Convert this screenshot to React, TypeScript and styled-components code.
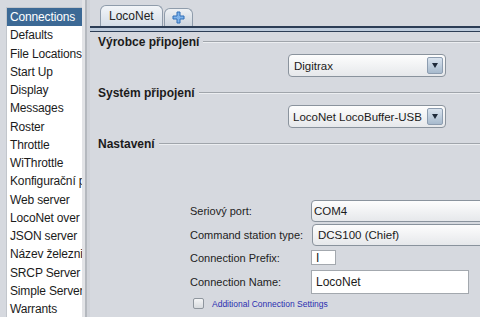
import styled, { createGlobalStyle } from "styled-components";

const GlobalStyle = createGlobalStyle`
    html, body {
        margin: 0;
        padding: 0;
        background: #d6d9df;
        font-family: "Liberation Sans", Arial, sans-serif;
        color: #1b1b1b;
    }
`;

const Window = styled.div`
    display: flex;
    width: 480px;
    height: 317px;
    overflow: hidden;
    background: #d6d9df;
`;

const Sidebar = styled.div`
    width: 82px;
    padding: 7px 0 0 6px;
    box-sizing: border-box;
    flex-shrink: 0;
`;

const List = styled.ul`
    margin: 0;
    padding: 0;
    list-style: none;
    background: #fff;
    border-left: 1px solid #c2c6cc;
    border-top: 1px solid #c2c6cc;
    height: 330px;
    overflow: hidden;
`;

const ListItem = styled.li<{ $selected?: boolean }>`
    height: 18.25px;
    line-height: 18.25px;
    padding-left: 3px;
    font-size: 12px;
    letter-spacing: -0.15px;
    white-space: nowrap;
    overflow: hidden;
    background: ${(p) => (p.$selected ? "#3c6995" : "transparent")};
    color: ${(p) => (p.$selected ? "#fff" : "#1b1b1b")};
`;

const Divider = styled.div`
    width: 8px;
    flex-shrink: 0;
    background: linear-gradient(to right, #e2e3e6 0, #e2e3e6 3px, #b4b8be 3px, #b4b8be 5px, #d0d3d9 5px);
`;

const Content = styled.div`
    flex: 1;
    overflow: hidden;
    display: flex;
    flex-direction: column;
`;

const TabStrip = styled.div`
    height: 26px;
    display: flex;
    align-items: flex-end;
    padding-left: 10px;
    gap: 1px;
`;

const Tab = styled.div<{ $active?: boolean }>`
    height: ${(p) => (p.$active ? "20px" : "17px")};
    padding: 0 ${(p) => (p.$active ? "8px" : "7px")};
    display: flex;
    align-items: center;
    border: 1px solid #8f9cab;
    border-bottom: none;
    border-radius: 6px 6px 0 0;
    background: ${(p) =>
        p.$active
            ? "linear-gradient(#f2f5f8, #d4dde7)"
            : "linear-gradient(#eef1f4, #cdd5de)"};
    font-size: 12px;
    color: #222;
`;

const TabBand = styled.div`
    height: 3px;
    border-top: 2px solid #2c3d55;
    border-bottom: 1px solid #2c3d55;
    background: #bccadb;
`;

const Panel = styled.div`
    display: flex;
    flex-direction: column;
    padding-left: 8px;
`;

const SectionTitle = styled.div<{ $top: number }>`
    display: flex;
    align-items: center;
    gap: 4px;
    height: 14px;
    margin-top: ${(p) => p.$top}px;
    font-size: 12px;
    font-weight: bold;
    white-space: nowrap;

    &::after {
        content: "";
        flex: 1;
        border-top: 1px solid #a0a5ab;
        border-bottom: 1px solid #eceef1;
    }
`;

const SelectBox = styled.div<{ $top: number; $left: number; $width: number; $height: number }>`
    margin-top: ${(p) => p.$top}px;
    margin-left: ${(p) => p.$left}px;
    width: ${(p) => p.$width}px;
    height: ${(p) => p.$height}px;
    flex-shrink: 0;
    display: flex;
    box-sizing: border-box;
    border: 1px solid #8a939d;
    border-radius: 4px;
    background: linear-gradient(#fdfdfd, #e6e8eb);
    overflow: hidden;
    font-size: 11.5px;
`;

const SelectText = styled.div<{ $pad: number }>`
    flex: 1;
    display: flex;
    align-items: center;
    padding-left: ${(p) => p.$pad}px;
    white-space: nowrap;
    overflow: hidden;
`;

const Arrow = styled.div`
    width: 14px;
    flex-shrink: 0;
    margin: 2px 2px 2px 0;
    border: 1px solid #8d9db0;
    border-radius: 2px;
    background: linear-gradient(#d9e3ee, #a7bacd);
    display: flex;
    align-items: center;
    justify-content: center;

    &::before {
        content: "";
        border-left: 3px solid transparent;
        border-right: 3px solid transparent;
        border-top: 5px solid #1f2b3a;
    }
`;

const Form = styled.div`
    margin-top: 49px;
    margin-left: 92px;
    display: grid;
    grid-template-columns: 121px 1fr;
    align-items: center;
    font-size: 11px;
`;

const Label = styled.div<{ $h: number; $gap: number }>`
    height: ${(p) => p.$h}px;
    margin-top: ${(p) => p.$gap}px;
    display: flex;
    align-items: center;
    white-space: nowrap;
    color: #222;
`;

const Cell = styled.div<{ $gap: number }>`
    margin-top: ${(p) => p.$gap}px;
    display: flex;
`;

const Input = styled.div<{ $w: number; $h: number }>`
    width: ${(p) => p.$w}px;
    height: ${(p) => p.$h}px;
    box-sizing: border-box;
    border: 1px solid #a3a8ae;
    background: #fff;
    padding-left: 4px;
    display: flex;
    align-items: center;
    font-size: 12px;
`;

const CheckRow = styled.div`
    grid-column: 1 / span 2;
    margin-top: 4px;
    margin-left: 3px;
    display: flex;
    align-items: center;
    gap: 8px;
    height: 11px;
`;

const Check = styled.div`
    width: 11px;
    height: 11px;
    box-sizing: border-box;
    border: 1px solid #8f969e;
    border-radius: 2px;
    background: linear-gradient(#f4f5f6, #d8dbdf);
`;

const LinkText = styled.span`
    font-size: 8.5px;
    color: #2b2fb0;
    white-space: nowrap;
`;

const PlusIcon = () => (
    <svg width="13" height="13" viewBox="0 0 13 13">
        <path
            d="M5 1h3v4h4v3H8v4H5V8H1V5h4z"
            fill="#7fb3ea"
            stroke="#2f6fb8"
            strokeWidth="1"
        />
    </svg>
);

const items = [
    "Connections",
    "Defaults",
    "File Locations",
    "Start Up",
    "Display",
    "Messages",
    "Roster",
    "Throttle",
    "WiThrottle",
    "Konfigurační panel",
    "Web server",
    "LocoNet over TCP",
    "JSON server",
    "Název železnice",
    "SRCP Server",
    "Simple Server",
    "Warrants",
];

export default function App() {
    return (
        <Window>
            <GlobalStyle />
            <Sidebar>
                <List>
                    {items.map((it, i) => (
                        <ListItem key={it} $selected={i === 0}>
                            {it}
                        </ListItem>
                    ))}
                </List>
            </Sidebar>
            <Divider />
            <Content>
                <TabStrip>
                    <Tab $active>LocoNet</Tab>
                    <Tab>
                        <PlusIcon />
                    </Tab>
                </TabStrip>
                <TabBand />
                <Panel>
                    <SectionTitle $top={3}>Výrobce připojení</SectionTitle>
                    <SelectBox $top={5} $left={190} $width={158} $height={23}>
                        <SelectText $pad={5}>Digitrax</SelectText>
                        <Arrow />
                    </SelectBox>
                    <SectionTitle $top={9}>Systém připojení</SectionTitle>
                    <SelectBox $top={5} $left={190} $width={158} $height={23}>
                        <SelectText $pad={4}>LocoNet LocoBuffer-USB</SelectText>
                        <Arrow />
                    </SelectBox>
                    <SectionTitle $top={9}>Nastavení</SectionTitle>
                    <Form>
                        <Label $h={22} $gap={0}>Seriový port:</Label>
                        <Cell $gap={0}>
                            <SelectBox $top={0} $left={0} $width={200} $height={22}>
                                <SelectText $pad={2}>COM4</SelectText>
                            </SelectBox>
                        </Cell>
                        <Label $h={22} $gap={2}>Command station type:</Label>
                        <Cell $gap={2}>
                            <SelectBox $top={0} $left={1} $width={200} $height={22}>
                                <SelectText $pad={5}>DCS100 (Chief)</SelectText>
                            </SelectBox>
                        </Cell>
                        <Label $h={15} $gap={4}>Connection Prefix:</Label>
                        <Cell $gap={4}>
                            <Input $w={25} $h={15}>I</Input>
                        </Cell>
                        <Label $h={24} $gap={5}>Connection Name:</Label>
                        <Cell $gap={5}>
                            <Input $w={158} $h={24}>LocoNet</Input>
                        </Cell>
                        <CheckRow>
                            <Check />
                            <LinkText>Additional Connection Settings</LinkText>
                        </CheckRow>
                    </Form>
                </Panel>
            </Content>
        </Window>
    );
}
